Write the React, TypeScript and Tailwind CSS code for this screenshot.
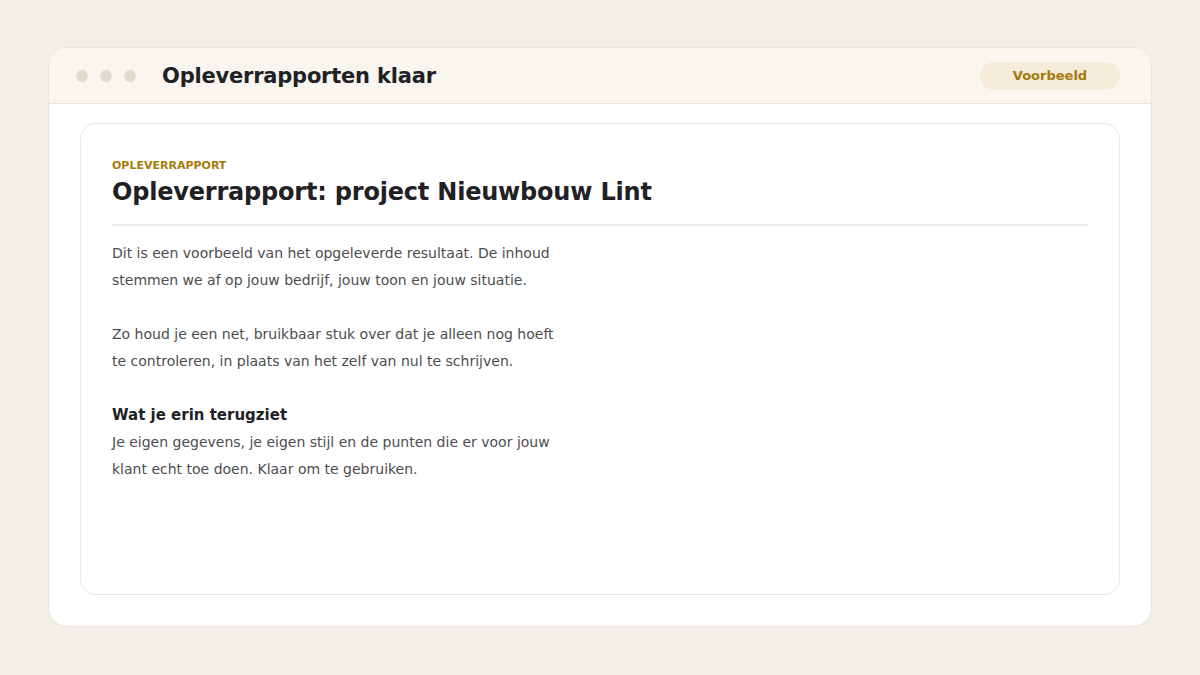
export default function App() {
  return (
    <div className="min-h-screen w-full bg-[#f3eee7] px-12 pt-[47px] font-['DejaVu_Sans',sans-serif]">
      <div className="flex h-[580px] flex-col overflow-hidden rounded-[20px] border border-[#ebe6dd] bg-white">
        {/* window bar */}
        <div className="flex h-14 shrink-0 items-center border-b border-[#e8e4dc] bg-[#f9f6ef] pl-[27px] pr-[31px]">
          <div className="flex items-center gap-3">
            <span className="h-3 w-3 rounded-full bg-[#e0dbcf]" />
            <span className="h-3 w-3 rounded-full bg-[#e0dbcf]" />
            <span className="h-3 w-3 rounded-full bg-[#e0dbcf]" />
          </div>
          <h1 className="ml-[26px] mt-[2px] text-[21px] font-bold tracking-[-0.01em] text-[#1f2124]">Opleverrapporten klaar</h1>
          <span className="ml-auto flex h-7 w-[140px] items-center justify-center rounded-full bg-[#f5ecd9] text-[13px] font-bold text-[#a27a10]">
            Voorbeeld
          </span>
        </div>

        {/* document */}
        <div className="flex-1 px-[31px] pb-[31px] pt-[19px]">
          <div className="h-full rounded-2xl border border-[#ebe8e2] px-[31px] pt-[34px]">
            <div className="text-[11px] font-bold text-[#a67c0b]">OPLEVERRAPPORT</div>
            <h2 className="mt-[1px] text-[24px] font-bold leading-[32px] tracking-[-0.2px] text-[#1f2124]">
              Opleverrapport: project Nieuwbouw Lint
            </h2>
            <div className="mt-[16px] h-[2px] bg-[#eeebe5]" />
            <div className="mt-[14px] max-w-[460px] text-[14px] leading-[27px] text-[#4d4d4f]">
              <p>
                Dit is een voorbeeld van het opgeleverde resultaat. De inhoud stemmen we af op jouw bedrijf, jouw toon en jouw situatie.
              </p>
              <p className="mt-[27px]">
                Zo houd je een net, bruikbaar stuk over dat je alleen nog hoeft te controleren, in plaats van het zelf van nul te schrijven.
              </p>
              <h3 className="mt-[27px] text-[15px] font-bold leading-[27px] text-[#1f2124]">Wat je erin terugziet</h3>
              <p>
                Je eigen gegevens, je eigen stijl en de punten die er voor jouw klant echt toe doen. Klaar om te gebruiken.
              </p>
            </div>
          </div>
        </div>
      </div>
    </div>
  );
}
